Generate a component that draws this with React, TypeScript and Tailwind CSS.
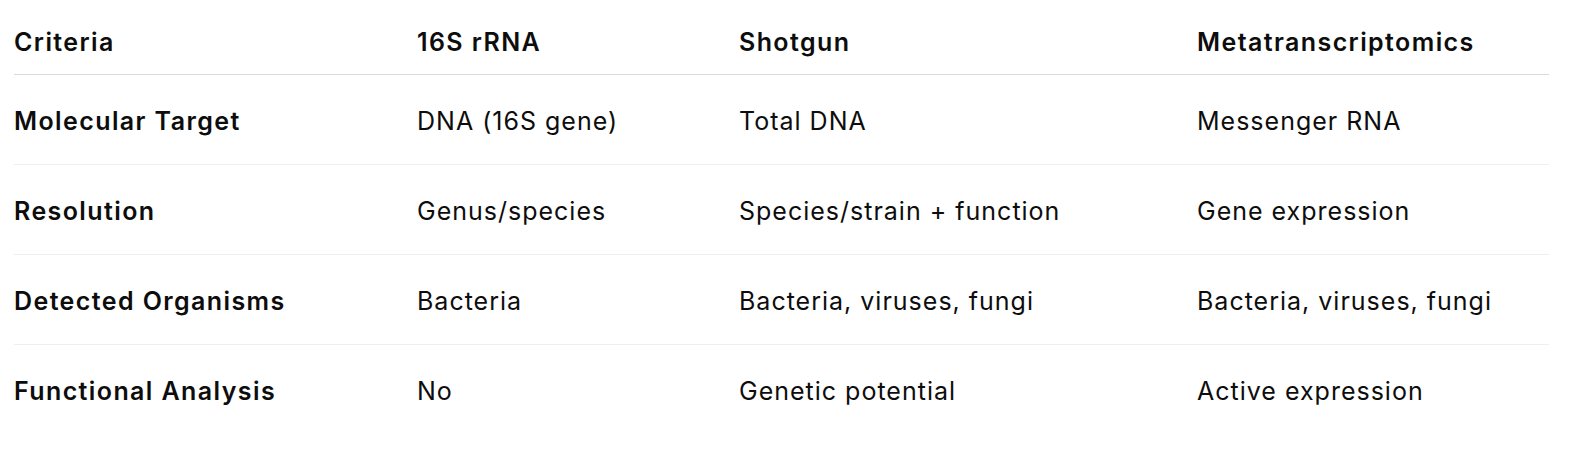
import React from 'react';

const headers = ["Criteria", "16S rRNA", "Shotgun", "Metatranscriptomics"];

const rows = [
  ["Molecular Target", "DNA (16S gene)", "Total DNA", "Messenger RNA"],
  ["Resolution", "Genus/species", "Species/strain + function", "Gene expression"],
  ["Detected Organisms", "Bacteria", "Bacteria, viruses, fungi", "Bacteria, viruses, fungi"],
  ["Functional Analysis", "No", "Genetic potential", "Active expression"],
];

// --- Comparison table ---
export default function App() {
  return (
    <div
      className="w-[1590px] h-[460px] bg-white text-[#0d0d0d] text-[25px] leading-[36px]"
      style={{ fontFamily: 'Inter, "Noto Sans", sans-serif' }}
    >
      <div className="pl-[14px] w-[1549px]">
        <div className="grid grid-cols-[403px_322px_458px_352px] pt-[24px] pb-[14px] border-b border-[#d9d9d9] font-semibold tracking-[1.4px]">
          {headers.map(h => (
            <div key={h}>{h}</div>
          ))}
        </div>
        {rows.map((row, i) => (
          <div
            key={row[0]}
            className={`grid grid-cols-[403px_322px_458px_352px] pt-[28px] pb-[25px] ${
              i < rows.length - 1 ? "border-b border-[#efefef]" : ""
            }`}
          >
            {row.map((cell, j) => (
              <div
                key={j}
                className={j === 0 ? "font-semibold tracking-[1.4px]" : "font-normal tracking-[1px]"}
              >
                {cell}
              </div>
            ))}
          </div>
        ))}
      </div>
    </div>
  );
}
